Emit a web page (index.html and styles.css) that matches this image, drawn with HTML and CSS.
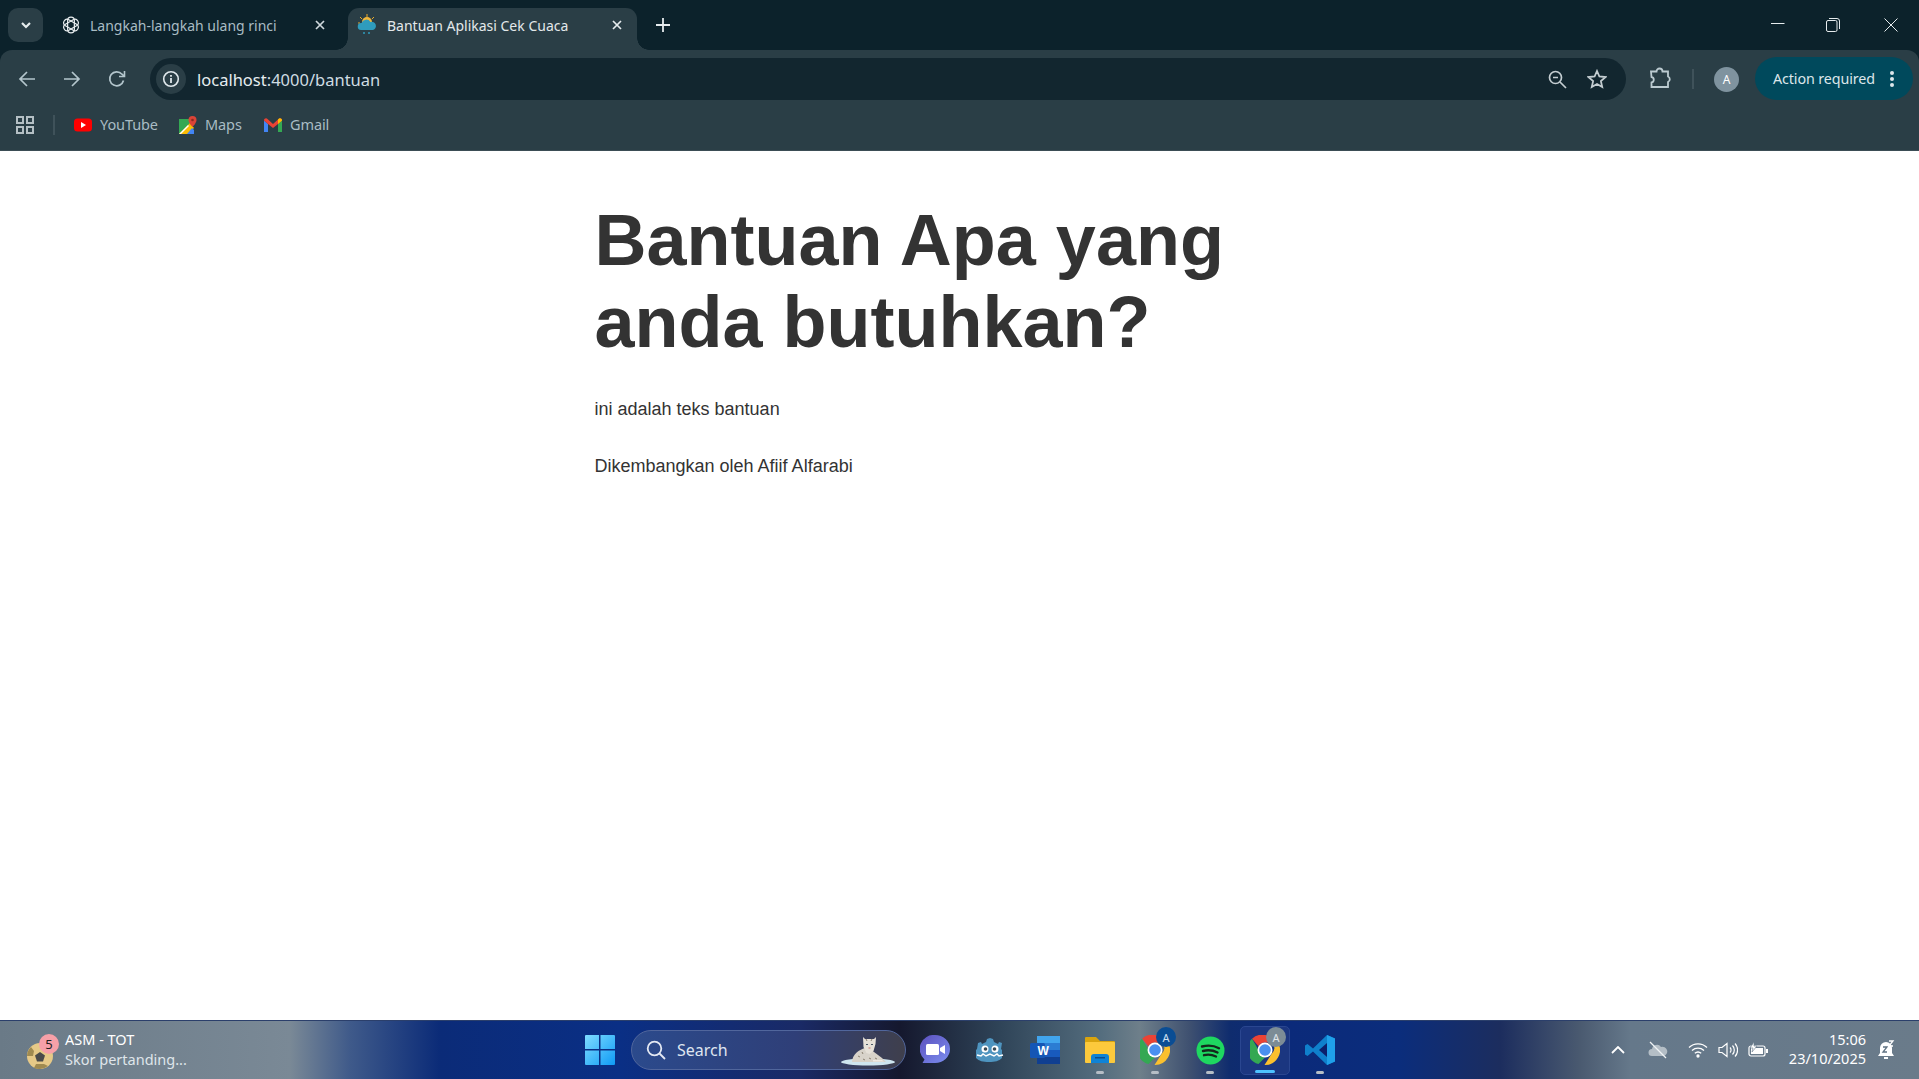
FILE: index.html
```html
<!DOCTYPE html>
<html lang="id">
<head>
<meta charset="utf-8">
<title>Bantuan Aplikasi Cek Cuaca</title>
<link rel="stylesheet" href="styles.css">
</head>
<body>
<div class="screen">
  <header class="tabstrip">
    <button class="tab-search"><svg width="14" height="14" viewBox="0 0 14 14"><path d="M3 5l4 4 4-4" fill="none" stroke="#e6ecee" stroke-width="2.2"/></svg></button>
    <div class="tab">
      <svg class="tab-icon" width="18" height="18" viewBox="0 0 24 24" fill="none" stroke="#e8edef" stroke-width="1.6"><rect x="7.500" y="1.500" width="9" height="21" rx="4.500"/><rect x="7.500" y="1.500" width="9" height="21" rx="4.500" transform="rotate(60 12 12)"/><rect x="7.500" y="1.500" width="9" height="21" rx="4.500" transform="rotate(120 12 12)"/></svg>
      <span class="tab-title">Langkah-langkah ulang rinci</span>
      <svg class="tab-close" width="12" height="12" viewBox="0 0 12 12"><path d="M2 2l8 8M10 2l-8 8" stroke="#cfd8dc" stroke-width="1.7"/></svg>
    </div>
    <div class="tab tab-active">
      <svg class="tab-icon-active" width="20" height="22" viewBox="0 0 20 22"><g stroke="#e8a92a" stroke-width="1"><path d="M10 0v3M3 3l2 2M17 3l-2 2M1 9h2"/></g><circle cx="10" cy="8" r="5" fill="#f3b73a"/><path d="M4 16a3.500 3.500 0 0 1 .5-7 5 5 0 0 1 9-1 4 4 0 0 1 2.500 8z" fill="#2f9cbd"/><path d="M7 18v2M12 18v2" stroke="#2f9cbd" stroke-width="1.500"/></svg>
      <span class="tab-title tab-title-active">Bantuan Aplikasi Cek Cuaca</span>
      <svg class="tab-close-active" width="12" height="12" viewBox="0 0 12 12"><path d="M2 2l8 8M10 2l-8 8" stroke="#e6ecee" stroke-width="1.700"/></svg>
    </div>
    <svg class="new-tab" width="14" height="14" viewBox="0 0 14 14"><path d="M7 0v14M0 7h14" stroke="#e6ecee" stroke-width="1.800"/></svg>
    <div class="window-controls">
      <svg class="win-min" width="14" height="14" viewBox="0 0 14 14"><path d="M0 5.500h13.500" stroke="#e6ecee"/></svg>
      <svg width="14" height="14" viewBox="0 0 14 14" fill="none" stroke="#e6ecee"><rect x=".5" y="2.500" width="10.500" height="11" rx="1.500"/><path d="M3 .5h8a2.500 2.500 0 0 1 2.500 2.500v8"/></svg>
      <svg width="14" height="14" viewBox="0 0 14 14"><path d="M.5.5l13 13M13.500.5l-13 13" stroke="#e6ecee"/></svg>
    </div>
  </header>

  <nav class="toolbar">
    <div class="nav-buttons">
      <svg width="18" height="18" viewBox="0 0 18 18" fill="none" stroke="#b4c6cd" stroke-width="1.700"><path d="M17 9H2M9 2L2 9l7 7"/></svg>
      <svg width="18" height="18" viewBox="0 0 18 18" fill="none" stroke="#b4c6cd" stroke-width="1.700"><path d="M1 9h15M9 2l7 7-7 7"/></svg>
      <svg width="18" height="18" viewBox="0 0 18 18" fill="none" stroke="#b4c6cd" stroke-width="1.700"><path d="M15.500 10.500A7 7 0 1 1 14 4.200L16 6"/><path d="M16.500 1v5.500H11" stroke-width="1.600"/></svg>
    </div>
    <div class="omnibox">
      <span class="info-chip"><svg width="18" height="18" viewBox="0 0 18 18"><circle cx="9" cy="9" r="7.300" fill="none" stroke="#dfe7eb" stroke-width="1.600"/><path d="M9 8v5M9 5v1.800" stroke="#dfe7eb" stroke-width="1.800"/></svg></span>
      <span class="url"><span class="url-host">localhost</span>:4000/bantuan</span>
      <svg class="omni-zoom" width="19" height="19" viewBox="0 0 19 19" fill="none" stroke="#c4cdd1" stroke-width="1.700"><circle cx="7.500" cy="7.500" r="6"/><path d="M5 7.500h5M12 12l6 6"/></svg>
      <svg class="omni-star" width="20" height="20" viewBox="0 0 20 20"><path d="M10 2l2.400 5.500 6 .6-4.500 4 1.300 5.900L10 15l-5.200 3 1.300-5.900-4.500-4 6-.6z" fill="none" stroke="#c4cdd1" stroke-width="1.800"/></svg>
    </div>
    <svg class="puzzle" width="22" height="22" viewBox="0 0 22 22"><path d="M2 4.500h5.500a3 3 0 0 1 6 0H19v5a3 3 0 0 1 0 5.500v5H2.500v-4.500a2.800 2.800 0 0 0 0-5.500z" fill="none" stroke="#bccbd1" stroke-width="1.800"/></svg>
    <span class="toolbar-divider"></span>
    <span class="avatar">A</span>
    <div class="action-pill">
      <span>Action required</span>
      <svg width="6" height="18" viewBox="0 0 6 18" fill="#dce6ea"><circle cx="3" cy="3" r="2"/><circle cx="3" cy="9" r="2"/><circle cx="3" cy="15" r="2"/></svg>
    </div>
  </nav>

  <div class="bookmarks">
    <svg class="apps" width="18" height="18" viewBox="0 0 18 18" fill="none" stroke="#b4bfc4" stroke-width="2"><rect x="1" y="1" width="6" height="6"/><rect x="11" y="1" width="6" height="6"/><rect x="1" y="11" width="6" height="6"/><rect x="11" y="11" width="6" height="6"/></svg>
    <span class="bm-divider"></span>
    <a class="bookmark bm-youtube"><svg width="18" height="14" viewBox="0 0 18 14"><rect width="18" height="13" y=".5" rx="3.500" fill="#f00"/><path d="M7 4l5 3-5 3z" fill="#fff"/></svg><span>YouTube</span></a>
    <a class="bookmark bm-maps"><svg width="18" height="18" viewBox="0 0 18 18"><path d="M0 3h11v15H0z" fill="#34a853"/><path d="M0 18L11 7l4 5-6 6z" fill="#fbbc04"/><path d="M0 18L9 9l1 1-8 8z" fill="#fff"/><path d="M8 18l5-6 2 2v4z" fill="#4285f4"/><path d="M0 3h9L0 12z" fill="#34a853"/><path d="M13.500 0a4 4 0 0 1 4 4c0 3-4 7-4 7s-4-4-4-7a4 4 0 0 1 4-4z" fill="#db4437"/><circle cx="13.500" cy="4" r="1.300" fill="#8e2a20"/></svg><span>Maps</span></a>
    <a class="bookmark bm-gmail"><svg width="18" height="14" viewBox="0 0 18 14"><path d="M0 2.500V14h4V6z" fill="#4285f4"/><path d="M14 6v8h4V2.500z" fill="#34a853"/><path d="M0 2.500a2 2 0 0 1 3.500-1.500L9 6l5.500-5A2 2 0 0 1 18 2.500L14 6 9 10 4 6z" fill="#ea4335"/><path d="M14 6l4-3.500a2 2 0 0 0-3.500-1.500L14 1.500z" fill="#fbbc04"/></svg><span>Gmail</span></a>
  </div>

  <main class="page">
    <div class="content">
      <h1>Bantuan Apa yang anda butuhkan?</h1>
      <p>ini adalah teks bantuan</p>
      <p>Dikembangkan oleh Afiif Alfarabi</p>
    </div>
  </main>

  <footer class="taskbar">
    <div class="widget">
      <span class="ball-wrap">
        <svg width="28" height="28" viewBox="0 0 28 28"><circle cx="14" cy="14" r="13" fill="#e6c987"/><path d="M14 10l5 3.500-2 6h-6l-2-6z" fill="#4a4a4a"/><path d="M1 14a13 13 0 0 1 4-9l3 4-1 5zM14 27a13 13 0 0 0 8-3l-4-2h-8l-2 4a13 13 0 0 0 6 1z" fill="#a08a50"/></svg>
        <span class="badge">5</span>
      </span>
      <span class="widget-text"><span class="widget-title">ASM - TOT</span><span class="widget-sub">Skor pertanding...</span></span>
    </div>

    <div class="dock">
      <svg class="win-logo" width="30" height="30" viewBox="0 0 30 30"><defs><linearGradient id="w" x1="0" y1="0" x2="1" y2="1"><stop offset="0" stop-color="#7fdcff"/><stop offset="1" stop-color="#0f9bf5"/></linearGradient></defs><path d="M1 0h13v14H0V1a1 1 0 0 1 1-1zM15.500 0H29a1 1 0 0 1 1 1v13H15.500zM0 15.500h14V30H1a1 1 0 0 1-1-1zM15.500 15.500H30V29a1 1 0 0 1-1 1H15.500z" fill="url(#w)"/></svg>
      <div class="search-pill">
        <svg width="20" height="20" viewBox="0 0 20 20" fill="none" stroke="#e4e9f3" stroke-width="1.800"><circle cx="8.500" cy="8.500" r="6.800"/><path d="M13.500 13.500l5.500 5.500"/></svg>
        <span>Search</span>
        <svg class="leopard" width="58" height="32" viewBox="0 0 58 32"><ellipse cx="29" cy="28" rx="27" ry="3.500" fill="#cfe6f0"/><path d="M13 28c0-7 7-13 14-14l4 1 12 9 4 4z" fill="#d8d3ca"/><path d="M24 3l2 2h9l2-2-.5 7-2 7-4 3-3-1-3-6z" fill="#e6e1d8"/><path d="M27 10.500h2M32 10.500h2" stroke="#4a5a68" stroke-width="1.200"/><path d="M29.500 14h2" stroke="#d08a80" stroke-width="1.200"/><path d="M19 22l2 1M23 18l1 2M30 24l2 1M24 25l2 1M36 24l2 1M27 5l1 2M33 5l-1 2" stroke="#8b8272"/><path d="M34 26h9l2 1.500H34z" fill="#efebe4"/></svg>
      </div>
      <div class="dock-item">
        <svg width="30" height="30" viewBox="0 0 30 30"><defs><linearGradient id="m" x1="0" y1="0" x2="1" y2="1"><stop offset="0" stop-color="#5b4fbd"/><stop offset="1" stop-color="#7c8ff0"/></linearGradient></defs><path d="M15 0a15 14 0 0 1 0 28H2.500l2-3.500A14 14 0 0 1 15 0z" fill="url(#m)"/><rect x="6" y="9" width="13" height="11" rx="1.500" fill="#fff"/><path d="M20 13l5-3v9l-5-3z" fill="#fff"/></svg>
      </div>
      <div class="dock-item">
        <svg width="28" height="26" viewBox="0 0 28 26"><path d="M2 6l3-1 1 2 4-2 1-3 3-1 3 1 1 3 4 2 1-2 3 1-1 6 1 1v8c-3 3-7 4-13 4s-10-1-13-4v-8l1-1z" fill="#4e94bf"/><circle cx="9" cy="12" r="3.500" fill="#fff"/><circle cx="19" cy="12" r="3.500" fill="#fff"/><circle cx="9.500" cy="12" r="1.800" fill="#3b4b55"/><circle cx="18.500" cy="12" r="1.800" fill="#3b4b55"/><path d="M1 18l4 1 2-2 3 2 4-2 4 2 3-2 2 2 4-1" fill="none" stroke="#fff" stroke-width="1.500"/></svg>
      </div>
      <div class="dock-item">
        <svg width="30" height="28" viewBox="0 0 30 28"><rect x="7" y="0" width="23" height="28" rx="1.500" fill="#2b7cd3"/><rect x="7" y="0" width="23" height="7" fill="#41a5ee"/><rect x="7" y="14" width="23" height="7" fill="#185abd"/><rect x="7" y="21" width="23" height="7" fill="#103f91"/><rect x="0" y="7" width="15" height="15" rx="1.500" fill="#1556b5"/><text class="word-w" x="7.500" y="19">W</text></svg>
      </div>
      <div class="dock-item dock-open">
        <svg width="30" height="26" viewBox="0 0 30 26"><path d="M1 0h10l4 4h14a1 1 0 0 1 1 1v4H0V1a1 1 0 0 1 1-1z" fill="#d9a40e"/><rect y="5" width="30" height="21" rx="1" fill="#fcc93c"/><path d="M6 26v-6a3 3 0 0 1 3-3h12a3 3 0 0 1 3 3v6z" fill="#0f83d6"/><rect x="10" y="20" width="10" height="1.500" fill="#0a4f8f"/></svg>
      </div>
      <div class="dock-item dock-open">
        <span class="chrome-wrap">
          <svg width="30" height="30" viewBox="0 0 30 30"><use href="#chrome"/></svg>
          <span class="chrome-badge">A</span>
        </span>
      </div>
      <div class="dock-item dock-open">
        <svg width="29" height="29" viewBox="0 0 29 29"><circle cx="14.500" cy="14.500" r="14" fill="#1ed760"/><path d="M6 10.500c6-1.500 12-1 17 1.700M7 15c5-1.200 10-.8 14.500 1.500M8 19.200c4-1 8-.6 12 1.300" fill="none" stroke="#14281c" stroke-width="2.400" stroke-linecap="round"/></svg>
      </div>
      <div class="dock-item dock-active">
        <span class="chrome-wrap">
          <svg width="30" height="30" viewBox="0 0 30 30"><use href="#chrome"/></svg>
          <span class="chrome-badge chrome-badge-grey">A</span>
        </span>
      </div>
      <div class="dock-item dock-open">
        <svg width="30" height="30" viewBox="0 0 30 30"><path d="M22 0l8 3.500v23L22 30 8 16.500 2.500 21 0 19.500V10.500L2.500 9 8 13.500z" fill="#0f80cc"/><path d="M22 0l8 3.500v23L22 30z" fill="#1fa0ea"/><path d="M22 8l-8 7 8 7z" fill="#0b1f6b"/></svg>
      </div>
    </div>

    <div class="tray">
      <svg class="tray-chevron" width="14" height="8" viewBox="0 0 14 8"><path d="M1 7l6-6 6 6" fill="none" stroke="#fff" stroke-width="1.800"/></svg>
      <svg class="tray-cloud" width="20" height="18" viewBox="0 0 20 18"><path d="M4 15a3.500 3.500 0 0 1 0-7 5 5 0 0 1 9-2 4.500 4.500 0 0 1 3 9z" fill="#b4bec6"/><path d="M2 1l16 16" stroke="#f0f3f5" stroke-width="1.300"/></svg>
      <svg class="tray-wifi" width="20" height="16" viewBox="0 0 20 16" fill="none" stroke="#fff" stroke-width="1.300"><path d="M1 5.500a13 13 0 0 1 18 0M4 8.500a9 9 0 0 1 12 0M6.800 11.300a5 5 0 0 1 6.400 0"/><circle cx="10" cy="14" r="1" fill="#fff"/></svg>
      <svg class="tray-sound" width="20" height="16" viewBox="0 0 20 16" fill="none" stroke="#fff" stroke-width="1.200"><path d="M1 5.500h3L9 1.500v13l-5-4H1zM12 5.500a3.500 3.500 0 0 1 0 5M14.500 3.500a6.500 6.500 0 0 1 0 9M17 1.500a9.500 9.500 0 0 1 0 13"/></svg>
      <svg class="tray-battery" width="20" height="16" viewBox="0 0 20 16"><rect x="1" y="4" width="16" height="10" rx="2" fill="none" stroke="#fff" stroke-width="1.200"/><rect x="3" y="6" width="12" height="6" fill="#fff"/><rect x="18" y="7" width="2" height="4" fill="#fff"/><path d="M6 0L2 6h3L4 10l5-6H6z" fill="#fff" stroke="#66788a" stroke-width=".6"/></svg>
      <div class="clock"><span>15:06</span><span>23/10/2025</span></div>
      <svg class="tray-bell" width="18" height="20" viewBox="0 0 18 20"><path d="M9 2a6 6 0 0 0-6 6v5l-2 3h16l-2-3V8a6 6 0 0 0-6-6z" fill="#fff"/><rect x="7" y="17" width="4" height="2" fill="#fff"/><path d="M6 7h4l-4 5h4" fill="none" stroke="#5f7282" stroke-width="1.300"/><path d="M12 1h4l-4 5h4" fill="none" stroke="#fff" stroke-width="1.300"/></svg>
    </div>
  </footer>
</div>
<svg class="defs" width="0" height="0"><defs>
  <symbol id="chrome" viewBox="0 0 30 30">
    <path d="M15 0a15 15 0 0 1 13 7.500H15a7.500 7.500 0 0 0-6.500 3.700L2 3.700A15 15 0 0 1 15 0z" fill="#ea4335"/>
    <path d="M2 3.700l6.500 11.300a7.500 7.500 0 0 0 6.500 7.500L8.500 29A15 15 0 0 1 2 3.700z" fill="#34a853"/>
    <path d="M28 7.500A15 15 0 0 1 15 30h-.5L21.500 19A7.500 7.500 0 0 0 22 7.500z" fill="#fbc02d"/>
    <circle cx="15" cy="15" r="7.500" fill="#fff"/>
    <circle cx="15" cy="15" r="5.800" fill="#4a90f0"/>
  </symbol>
</defs></svg>
</body>
</html>
```
FILE: styles.css
```css
* { box-sizing: border-box; }
html, body { margin: 0; height: 100%; overflow: hidden; }
body { font-family: "Noto Sans", "Open Sans", sans-serif; background: #fff; }
.defs { position: absolute; }
.screen { display: flex; flex-direction: column; height: 1079px; width: 1919px; background: #0c222b; }

/* tab strip */
.tabstrip { height: 50px; flex: none; background: #0c222b; display: flex; align-items: flex-start; }
.tab-search { width: 35px; height: 34px; margin: 8px 0 0 8px; border: 0; padding: 0; border-radius: 10px; background: #2a3e46; display: flex; align-items: center; justify-content: center; }
.tab { height: 42px; margin-top: 8px; padding-bottom: 8px; display: flex; align-items: center; color: #a9bcc4; font-size: 14px; }
.tab:not(.tab-active) { width: 305px; }
.tab-icon { margin-left: 19px; flex: none; }
.tab-title { margin-left: 10px; white-space: nowrap; flex: 1; }
.tab-close { margin-right: 22px; flex: none; }
.tab-active { width: 289px; background: #2a3e46; color: #e3e8ea; border-radius: 11px 11px 0 0; position: relative; }
.tab-active::before, .tab-active::after { content: ""; position: absolute; bottom: 0; width: 12px; height: 12px; background: radial-gradient(circle at 0 0, #0c222b 11.500px, #2a3e46 12px); }
.tab-active::before { left: -12px; }
.tab-active::after { right: -12px; background: radial-gradient(circle at 100% 0, #0c222b 11.500px, #2a3e46 12px); }
.tab-icon-active { margin-left: 9px; flex: none; }
.tab-close-active { margin-right: 14px; flex: none; }
.new-tab { margin: 18px 0 0 19px; flex: none; }
.window-controls { margin-left: auto; margin-right: 21px; margin-top: 18px; display: flex; gap: 44px; }
.win-min { margin-left: 3px; margin-right: -3px; }

/* toolbar */
.toolbar { height: 50px; flex: none; background: #2a3e46; border-radius: 12px 12px 0 0; display: flex; align-items: center; }
.nav-buttons { display: flex; gap: 27px; margin-left: 18px; margin-top: 8px; width: 132px; flex: none; }
.omnibox { width: 1476px; height: 42px; margin-top: 8px; border-radius: 21px; background: #12262f; display: flex; align-items: center; padding-left: 6px; flex: none; }
.info-chip { width: 30px; height: 30px; border-radius: 50%; background: #2a3e46; display: flex; align-items: center; justify-content: center; flex: none; }
.url { margin-left: 11px; font-size: 16.500px; color: #cfdce2; }
.url-host { color: #e6edf0; }
.omni-zoom { margin-left: auto; margin-right: 21px; position: relative; left: 1px; }
.omni-star { margin-right: 19px; }
.puzzle { margin-left: 23px; margin-top: 6px; flex: none; }
.toolbar-divider { width: 2px; height: 20px; background: #3f525a; margin-left: 21px; margin-top: 8px; flex: none; }
.avatar { width: 25px; height: 25px; border-radius: 50%; background: #7f939f; color: #fff; font-size: 12px; display: flex; align-items: center; justify-content: center; margin-left: 20px; margin-top: 8px; flex: none; }
.action-pill { width: 158px; height: 43px; border-radius: 22px; background: #00495c; margin-left: 16px; margin-top: 7px; display: flex; align-items: center; justify-content: space-between; padding: 0 18px 0 18px; color: #dce6ea; font-size: 14.300px; flex: none; letter-spacing: -.1px; }

/* bookmarks */
.bookmarks { height: 51px; flex: none; background: #2a3e46; display: flex; align-items: center; padding-left: 16px; color: #a9bcc4; font-size: 14.500px; border-bottom: 1px solid #3b4d55; }
.bm-divider { width: 2px; height: 20px; background: #3f525a; margin: 0 19px 0 19px; }
.bookmark { display: flex; align-items: center; gap: 8px; }
.bookmark span { letter-spacing: -.1px; margin-top: -2px; }
.bm-youtube { width: 105px; }
.bm-maps { width: 85px; }

/* page */
.page { flex: 1; background: #fff; padding-top: 48px; }
.content { width: 730px; margin: 0 auto; font-family: "Liberation Sans", Arial, sans-serif; color: #333; }
h1 { font-size: 72px; font-weight: 700; margin: 0 0 36px; line-height: 82px; color: #333; }
p { margin: 0 0 36px; font-size: 18px; line-height: 21px; }

/* taskbar */
.taskbar { height: 59px; flex: none; display: flex; align-items: center; color: #fff; border-top: 1px solid #2b3f6b; background: linear-gradient(90deg, #6a7a87 0, #7a8996 290px, #3f5a8a 350px, #0b2b78 440px, #0a2f85 620px, #1a2a66 800px, #15182e 900px, #2f4458 1000px, #546d7e 1100px, #6e7f8a 1140px, #3e5070 1190px, #0f2c6e 1230px, #0b2a7a 1290px, #0b2d7c 1400px, #1c2d5e 1500px, #4a5a70 1580px, #65788a 1630px, #6a7b8a 1919px); }
.widget { width: 585px; padding-left: 26px; display: flex; align-items: center; flex: none; }
.ball-wrap { position: relative; width: 28px; height: 28px; margin-top: 12px; flex: none; }
.badge { position: absolute; left: 13px; top: -8px; width: 20px; height: 20px; border-radius: 50%; background: #f7a0a8; color: #222; font-size: 13px; display: flex; align-items: center; justify-content: center; }
.widget-text { display: flex; flex-direction: column; margin-left: 11px; margin-top: -2px; font-size: 14.500px; line-height: 20px; }
.widget-title { color: #fff; }
.widget-sub { color: #dfe5ea; }
.dock { display: flex; align-items: center; flex: none; }
.win-logo { flex: none; margin-right: 16px; }
.search-pill { width: 275px; height: 40px; border-radius: 20px; background: linear-gradient(90deg, #2b4a8c, #2f3f78 60%, #3f3f4c); border: 1px solid #51669c; display: flex; align-items: center; padding-left: 14px; color: #dfe5f0; font-size: 16px; gap: 11px; flex: none; margin-right: 1.500px; }
.leopard { margin-left: auto; margin-right: 8px; }
.dock-item { width: 55px; height: 49px; display: flex; align-items: center; justify-content: center; position: relative; flex: none; }
.dock-open::after, .dock-active::after { content: ""; position: absolute; bottom: 1px; left: 50%; width: 8px; height: 3px; margin-left: -4px; border-radius: 2px; background: #b6bec6; }
.dock-active { background: #1b3680; border: 1px solid #2a4690; border-radius: 5px; width: 50px; margin: 0 2.500px; }
.dock-active::after { width: 20px; margin-left: -10px; background: #4cc2ff; }
.word-w { font-family: "Liberation Sans", sans-serif; font-weight: 700; font-size: 12px; fill: #fff; }
.chrome-wrap { position: relative; display: block; width: 30px; height: 30px; }
.chrome-badge { position: absolute; left: 16px; top: -8px; width: 20px; height: 20px; border-radius: 50%; background: #0a4d94; color: #cfe0f2; font-size: 11px; display: flex; align-items: center; justify-content: center; }
.chrome-badge-grey { background: #7c8c96; color: #e0e6ea; }
.tray { display: flex; align-items: center; margin-left: auto; margin-right: 24px; flex: none; }
.tray-chevron { margin-right: 23px; }
.tray-cloud { margin-right: 20px; }
.tray-wifi { margin-right: 10px; }
.tray-sound { margin-right: 10px; }
.tray-battery { margin-right: 20px; }
.clock { display: flex; flex-direction: column; align-items: flex-end; font-size: 14.500px; line-height: 19px; width: 78px; margin-right: 11px; margin-top: -2px; }
```
